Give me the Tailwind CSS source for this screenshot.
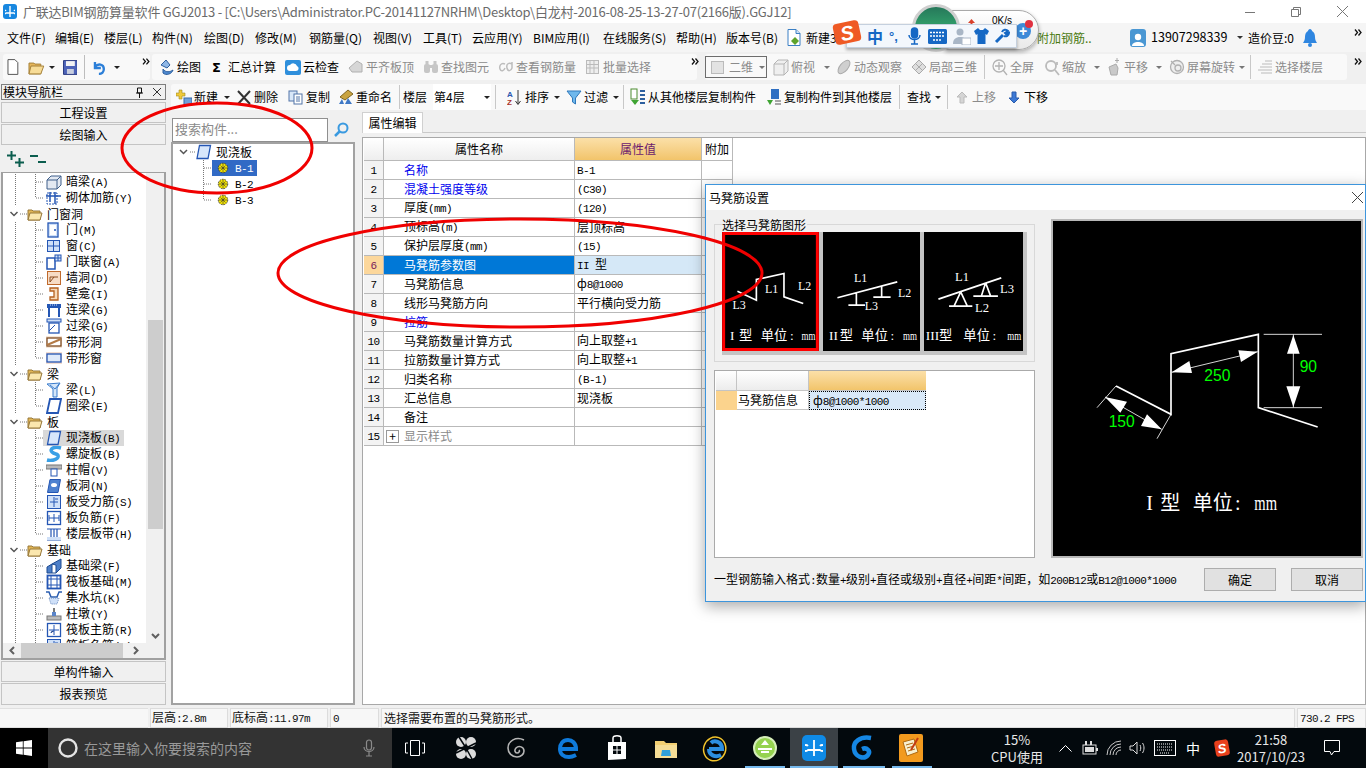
<!DOCTYPE html>
<html lang="zh-CN">
<head>
    <meta charset="UTF-8">
    <meta name="viewport" content="width=device-width, initial-scale=1.0">
    <title>广联达BIM钢筋算量软件 GGJ2013</title>
    <script src="https://cdn.jsdelivr.net/npm/@tailwindcss/browser@4"></script>
</head>
<body class="relative w-[1366px] h-[768px] overflow-hidden flex flex-col bg-[#f0f0f0] text-[12px] leading-none text-black font-['Noto_Sans_CJK_SC',sans-serif]">

    <!-- Title bar -->
    <div class="h-[23px] shrink-0 bg-white flex items-center text-[13px] text-[#6b6b6b]">
        <div class="ml-[3px] w-[14px] h-[15px] rounded-[3px] bg-[#1787e0] flex items-center justify-center">
            <svg width="10" height="11" viewBox="0 0 10 11" fill="none" stroke="#fff" stroke-width="1.4"><path d="M5 0v11M1 5a2 2 0 1 0 0 2h8a2 2 0 1 0 0-2"/></svg>
        </div>
        <span class="ml-[6px] whitespace-nowrap tracking-[-0.23px] w-[800px]">广联达BIM钢筋算量软件 GGJ2013 - [C:\Users\Administrator.PC-20141127NRHM\Desktop\白龙村-2016-08-25-13-27-07(2166版).GGJ12]</span>
        <svg class="ml-[422px]" width="10" height="10" viewBox="0 0 10 10" stroke="#777"><path d="M0 5.5h10"/></svg>
        <svg class="ml-[36px]" width="10" height="10" viewBox="0 0 10 10" fill="none" stroke="#777"><path d="M.5 2.5h7v7h-7zM2.5 2.5v-2h7v7h-2"/></svg>
        <svg class="ml-[36px]" width="11" height="11" viewBox="0 0 11 11" stroke="#777"><path d="M0 0l11 11M11 0L0 11"/></svg>
    </div>

    <!-- Menu bar -->
    <div class="h-[29px] shrink-0 bg-[#f5f5f5] flex items-center whitespace-nowrap">
        <div class="w-[7px]"></div>
        <div class="w-[48px]">文件(F)</div>
        <div class="w-[49px]">编辑(E)</div>
        <div class="w-[48px]">楼层(L)</div>
        <div class="w-[52px]">构件(N)</div>
        <div class="w-[51px]">绘图(D)</div>
        <div class="w-[54px]">修改(M)</div>
        <div class="w-[64px]">钢筋量(Q)</div>
        <div class="w-[50px]">视图(V)</div>
        <div class="w-[49px]">工具(T)</div>
        <div class="w-[61px]">云应用(Y)</div>
        <div class="w-[70px]">BIM应用(I)</div>
        <div class="w-[73px]">在线服务(S)</div>
        <div class="w-[50px]">帮助(H)</div>
        <div class="w-[61px]">版本号(B)</div>
        <div class="w-[19px]">
            <svg width="14" height="17" viewBox="0 0 14 17"><path d="M1 .5h8l4 4v12H1z" fill="#fff" stroke="#3b7fc4"/><path d="M9 .5v4h4" fill="#cfe2f6" stroke="#3b7fc4"/><path d="M8 8l4 4-4 4-4-4z" fill="#5da32c"/></svg>
        </div>
        <div class="w-[231px]">新建3</div>
        <div class="w-[93px] text-[#4a7a10]">附加钢筋..</div>
        <div class="w-[21px]">
            <div class="w-[16px] h-[18px] rounded-[3px] bg-[#4a97d3] flex items-end justify-center overflow-hidden">
                <svg width="14" height="15" viewBox="0 0 14 15" fill="#fff"><circle cx="7" cy="5" r="3.2"/><path d="M1 14c0-3 3-4 6-4s6 1 6 4z"/></svg>
            </div>
        </div>
        <div class="w-[86px] text-[12.5px]">13907298339</div>
        <div class="w-[11px]"><i class="block w-0 h-0 border-x-[3px] border-x-transparent border-t-[3px] border-t-[#333]"></i></div>
        <div class="w-[55px]">造价豆:0</div>
        <svg width="14" height="18" viewBox="0 0 14 18" fill="#2f86e0"><path d="M7 0c1 0 2 1 2 2 2 1 3 3 3 6 0 3 1 4 2 6H0c1-2 2-3 2-6 0-3 1-5 3-6 0-1 1-2 2-2z"/><circle cx="7" cy="16" r="2"/></svg>
        <svg class="ml-auto mr-[4px] -mt-[10px]" width="8" height="7" viewBox="0 0 8 7" fill="none" stroke="#111" stroke-width="1.300"><path d="M1 .5L3.500 3.500 1 6.500M4.500 .5L7 3.500 4.500 6.500"/></svg>
    </div>

    <!-- Main toolbar -->
    <div class="h-[30px] shrink-0 flex items-center whitespace-nowrap text-[#8b8b8b]">
        <div class="ml-[3px] w-[147px] h-[26px] rounded-[3px] bg-[#f9f9f9] flex items-center text-black">
            <svg class="ml-[3px]" width="14" height="16" viewBox="0 0 14 16"><path d="M2 .5h7l3 3v12H2z" fill="#fff" stroke="#555"/></svg>
            <svg class="ml-[8px]" width="17" height="15" viewBox="0 0 17 15"><path d="M1 14V3h5l1 1h6v10z" fill="#e6b65a" stroke="#a5813a"/><path d="M3 6h13l-3 8H1z" fill="#f7dc97" stroke="#a5813a"/></svg>
            <i class="ml-[4px] w-0 h-0 border-x-[3px] border-x-transparent border-t-[3px] border-t-[#222]"></i>
            <svg class="ml-[8px]" width="15" height="15" viewBox="0 0 15 15"><path d="M.5.5h14v14H.5z" fill="#4d63b8" stroke="#2a3a80"/><path d="M3 1h9v5H3z" fill="#f3f3f3"/><path d="M4 9h7v5H4z" fill="#c9cfdf"/></svg>
            <div class="ml-[7px] w-px h-[24px] bg-[#bdbdbd]"></div>
            <svg class="ml-[7px]" width="15" height="15" viewBox="0 0 15 15" fill="none" stroke="#2c7fd8" stroke-width="2.4"><path d="M3 2v6h6"/><path d="M3 7c3-4 9-3 9 2 0 3-2 5-5 5"/></svg>
            <i class="ml-[7px] w-0 h-0 border-x-[3px] border-x-transparent border-t-[3px] border-t-[#222]"></i>
            <svg class="ml-[22px] -mt-[12px]" width="8" height="7" viewBox="0 0 8 7" fill="none" stroke="#111" stroke-width="1.300"><path d="M1 .5L3.500 3.500 1 6.500M4.500 .5L7 3.500 4.500 6.500"/></svg>
        </div>
        <div class="ml-[2px] w-[545px] h-[26px] rounded-[3px] bg-[#f9f9f9] flex items-center">
            <div class="ml-[7px] w-[51px] flex items-center gap-[2px] text-black"><svg width="16" height="17" viewBox="0 0 16 17"><path d="M2 6l5-5 4 5-3 3z" fill="#8fb7e6" stroke="#2d5f9e"/><path d="M4 10c3 4 7 3 10 1-1 4-7 6-10 3z" fill="#4f8ad0" stroke="#2d5f9e"/></svg><span>绘图</span></div>
            <div class="w-[75px] flex items-center gap-[2px] text-black"><span class="w-[16px] pl-[2px] font-bold font-['DejaVu_Sans'] text-[13px]">Σ</span><span>汇总计算</span></div>
            <div class="w-[63px] flex items-center gap-[2px] text-black"><div class="w-[16px] h-[15px] rounded-[2px] bg-[#2f8fdc] flex items-center justify-center"><svg width="12" height="10" viewBox="0 0 12 10" fill="#fff"><path d="M3 9a3 3 0 0 1 0-6 4 4 0 0 1 7 1 2.6 2.6 0 0 1-1 5z"/></svg></div><span>云检查</span></div>
            <div class="w-[75px] flex items-center gap-[2px]"><svg width="16" height="16" viewBox="0 0 16 16"><path d="M1 9l8-7 5 3v8H4z" fill="#d6d6d6" stroke="#b0b0b0"/></svg><span>平齐板顶</span></div>
            <div class="w-[75px] flex items-center gap-[2px]"><svg width="16" height="14" viewBox="0 0 16 14" fill="#c6c6c6"><rect x="1" y="4" width="6" height="9" rx="2"/><rect x="9" y="4" width="6" height="9" rx="2"/><rect x="6" y="5" width="4" height="3"/><rect x="2.5" y="1" width="3" height="3"/><rect x="10.5" y="1" width="3" height="3"/></svg><span>查找图元</span></div>
            <div class="w-[87px] flex items-center gap-[2px]"><svg width="16" height="12" viewBox="0 0 16 12" fill="none" stroke="#bdbdbd" stroke-width="1.5"><path d="M7 3C3 1 1 5 2 8s4 2 5-1M14 3c-3-2-6 0-5 4s4 3 5 0V1"/></svg><span>查看钢筋量</span></div>
            <div class="w-[75px] flex items-center gap-[2px]"><svg width="16" height="16" viewBox="0 0 16 16" fill="#eee" stroke="#bbb"><rect x="1.5" y="1.5" width="12" height="13"/><path d="M1.5 5.5h12M1.5 9h12M5 1.500v13M9 1.500v13"/></svg><span>批量选择</span></div>
        </div>
        <svg class="-ml-[6px] mr-[6px] -mt-[12px]" width="8" height="7" viewBox="0 0 8 7" fill="none" stroke="#111" stroke-width="1.300"><path d="M1 .5L3.500 3.500 1 6.500M4.500 .5L7 3.500 4.500 6.500"/></svg>
        <div class="w-[642px] h-[26px] rounded-[3px] bg-[#f9f9f9] flex items-center">
            <div class="w-[62px] h-[22px] border border-[#6d6d6d] flex items-center"><span class="ml-[5px] w-[13px] h-[13px] bg-[#e3e3e3] border border-[#bbb]"></span><span class="ml-[5px]">二维</span><i class="ml-[6px] w-0 h-0 border-x-[3px] border-x-transparent border-t-[3px] border-t-[#777]"></i></div>
            <div class="ml-[6px] w-[63px] flex items-center gap-[2px]"><svg width="16" height="17" viewBox="0 0 16 17" fill="#efefef" stroke="#b5b5b5"><path d="M1 5h10v11H1zM1 5l4-4h10v11l-4 4M11 5l4-4"/></svg><span>俯视</span><i class="ml-[7px] w-0 h-0 border-x-[3px] border-x-transparent border-t-[3px] border-t-[#777]"></i></div>
            <div class="w-[75px] flex items-center gap-[2px]"><svg width="16" height="16" viewBox="0 0 16 16"><ellipse cx="8" cy="8" rx="4" ry="8" transform="rotate(40 8 8)" fill="#cfcfcf" stroke="#aaa"/></svg><span>动态观察</span></div>
            <div class="w-[73px] flex items-center gap-[2px]"><svg width="16" height="16" viewBox="0 0 16 16" fill="#dedede" stroke="#aaa"><path d="M8 1l7 7-7 7-7-7zM4 4l8 8M12 4l-8 8"/></svg><span>局部三维</span></div>
            <div class="w-px h-[24px] bg-[#c8c8c8]"></div>
            <div class="ml-[7px] w-[52px] flex items-center gap-[2px]"><svg width="16" height="17" viewBox="0 0 16 17" fill="none" stroke="#b3b3b3" stroke-width="1.3"><circle cx="7" cy="7" r="6"/><path d="M11 11l4 5M7 3v8M3 7h8"/></svg><span>全屏</span></div>
            <div class="w-[62px] flex items-center gap-[2px]"><svg width="16" height="17" viewBox="0 0 16 17" fill="none" stroke="#bbb" stroke-width="1.8"><circle cx="7" cy="7" r="5"/><path d="M11 11l4 5M13 3v3"/></svg><span>缩放</span><i class="ml-[6px] w-0 h-0 border-x-[3px] border-x-transparent border-t-[3px] border-t-[#777]"></i></div>
            <div class="w-[63px] flex items-center gap-[2px]"><svg width="16" height="18" viewBox="0 0 16 18" fill="#c9c9c9"><path d="M3 9l7-3 2 4-1 7H5zM11 0v5M9 2.500h4" stroke="#aaa"/></svg><span>平移</span><i class="ml-[6px] w-0 h-0 border-x-[3px] border-x-transparent border-t-[3px] border-t-[#777]"></i></div>
            <div class="w-[81px] flex items-center gap-[2px]"><svg width="16" height="16" viewBox="0 0 16 16" fill="#eee" stroke="#b0b0b0" stroke-width="1.300"><circle cx="8" cy="8" r="6.500"/><circle cx="9" cy="9" r="3"/><path d="M2 2l4 4"/></svg><span>屏幕旋转</span><i class="ml-[2px] w-0 h-0 border-x-[3px] border-x-transparent border-t-[3px] border-t-[#777]"></i></div>
            <div class="w-px h-[24px] bg-[#c8c8c8]"></div>
            <div class="ml-[6px] flex items-center gap-[2px]"><svg width="16" height="14" viewBox="0 0 16 14" fill="none" stroke="#bbb"><path d="M5 4h10M3 7h12M1 10h14M4 13h11M8 1h7"/></svg><span>选择楼层</span></div>
        </div>
        <svg class="ml-auto mr-[4px] -mt-[12px]" width="8" height="7" viewBox="0 0 8 7" fill="none" stroke="#111" stroke-width="1.300"><path d="M1 .5L3.500 3.500 1 6.500M4.500 .5L7 3.500 4.500 6.500"/></svg>
    </div>

    <!-- Workspace -->
    <div class="flex-1 min-h-0 flex">

        <!-- Module navigation -->
        <aside class="w-[171px] shrink-0 pl-[1px] pr-[5px] pt-[2px] flex flex-col">
            <div class="h-[16px] border border-[#7e7e7e] bg-[#f0f0f0] flex items-center pl-[1px]">
                <span>模块导航栏</span>
                <svg class="ml-[72px]" width="9" height="11" viewBox="0 0 9 11" fill="none" stroke="#111"><path d="M2.500 1h4v5h-4zM1 6h7M4.500 6v5"/></svg>
                <svg class="ml-[9px]" width="8" height="8" viewBox="0 0 8 8" stroke="#333"><path d="M0 0l8 8M8 0L0 8"/></svg>
            </div>
            <div class="mt-[2px] h-[21px] border border-[#c4c4c4] bg-[#f0f0f0] flex items-center justify-center">工程设置</div>
            <div class="mt-[1px] h-[21px] border border-[#c4c4c4] bg-[#f0f0f0] flex items-center justify-center">绘图输入</div>
            <div class="h-[27px] flex items-center pl-[6px] gap-[6px]">
                <svg width="17" height="16" viewBox="0 0 17 16" fill="none" stroke="#0b5d4e" stroke-width="2"><path d="M0 4.500h9M4.500 0v9M8 11.500h9M12.500 7v9"/></svg>
                <svg width="16" height="10" viewBox="0 0 16 10" fill="none" stroke="#0b5d4e" stroke-width="2"><path d="M0 2h8M8 8h8"/></svg>
            </div>
            <div class="h-[488px] border-2 border-[#a0a0a0] bg-[#f0f0f0] flex flex-col border-t-[1px]">
                <div class="flex-1 min-h-0 flex">
                    <div id="navTree" class="w-[143px] shrink-0 bg-white overflow-hidden pt-[1px]"></div>
                    <div class="flex-1 flex flex-col items-center">
                        <div class="h-[147px]"></div>
                        <div class="w-[15px] h-[209px] bg-[#cdcdcd]"></div>
                        <div class="flex-1"></div>
                        <svg class="mb-[4px]" width="9" height="6" viewBox="0 0 9 6" fill="none" stroke="#606060" stroke-width="2"><path d="M1 1l3.500 3.500L8 1"/></svg>
                    </div>
                </div>
                <div class="h-[15px] shrink-0 flex items-center">
                    <svg class="ml-[6px]" width="6" height="9" viewBox="0 0 6 9" fill="none" stroke="#606060" stroke-width="2"><path d="M5 1L1.500 4.500 5 8"/></svg>
                    <div class="ml-[6px] w-[102px] h-[15px] bg-[#cdcdcd]"></div>
                    <svg class="ml-[10px]" width="6" height="9" viewBox="0 0 6 9" fill="none" stroke="#606060" stroke-width="2"><path d="M1 1l3.500 3.500L1 8"/></svg>
                </div>
            </div>
            <div class="mt-[1px] h-[21px] border border-[#c4c4c4] bg-[#f0f0f0] flex items-center justify-center">单构件输入</div>
            <div class="mt-[1px] h-[22px] border border-[#c4c4c4] bg-[#f0f0f0] flex items-center justify-center">报表预览</div>
        </aside>

        <div class="flex-1 min-w-0 flex flex-col">
            <!-- Component toolbar -->
            <div class="mt-[2px] h-[26px] shrink-0 rounded-l-[3px] bg-[#f9f9f9] flex items-center whitespace-nowrap pl-[5px]">
                <div class="w-[60px] flex items-center gap-[2px]"><svg width="16" height="16" viewBox="0 0 16 16"><path d="M3 1h3v3h3v3H6v3H3V7H0V4h3z" fill="#f0c93a" stroke="#a08a1e" stroke-width=".6"/><rect x="8" y="9" width="8" height="7" fill="#6ea0dc" stroke="#3869a8"/></svg><span>新建</span><i class="ml-[4px] w-0 h-0 border-x-[3px] border-x-transparent border-t-[3px] border-t-[#222]"></i></div>
                <div class="w-[52px] flex items-center gap-[2px]"><svg width="16" height="15" viewBox="0 0 16 15" stroke="#333" stroke-width="2"><path d="M2 1l12 13M14 1L2 14"/></svg><span>删除</span></div>
                <div class="w-[50px] flex items-center gap-[2px]"><svg width="16" height="15" viewBox="0 0 16 15"><rect x="1" y="1" width="8" height="10" fill="#d9e7f8" stroke="#5375a8"/><rect x="6" y="4" width="8" height="10" fill="#fff" stroke="#5375a8"/><path d="M8 7h4M8 9h4M8 11h4" stroke="#5375a8"/></svg><span>复制</span></div>
                <div class="w-[61px] flex items-center gap-[2px]"><svg width="16" height="16" viewBox="0 0 16 16"><path d="M2 8l8-7 5 4-8 6z" fill="#c9a441" stroke="#806520"/><path d="M1 15l3-5 2 5zM7 15l3-6 4 6z" fill="#3f79c6"/></svg><span>重命名</span></div>
                <div class="w-px h-[24px] bg-[#c8c8c8]"></div>
                <div class="ml-[3px]">楼层</div>
                <div class="ml-[6px] w-[58px] h-[26px] bg-white flex items-center justify-between pl-px pr-[1px]"><span>第4层</span><i class="w-0 h-0 border-x-[3px] border-x-transparent border-t-[3px] border-t-[#222]"></i></div>
                <div class="ml-[4px] w-px h-[24px] bg-[#c8c8c8]"></div>
                <div class="ml-[11px] w-[59px] flex items-center gap-[2px]"><svg width="16" height="17" viewBox="0 0 16 17"><text x="0" y="8" font-size="8" fill="#2a58b0" font-family="Liberation Sans" font-weight="bold">A</text><text x="0" y="16" font-size="8" fill="#a8332a" font-family="Liberation Sans" font-weight="bold">Z</text><path d="M11 1v14M8.500 12l2.500 3.500 2.500-3.500" fill="none" stroke="#333"/></svg><span>排序</span><i class="ml-[3px] w-0 h-0 border-x-[3px] border-x-transparent border-t-[3px] border-t-[#222]"></i></div>
                <div class="w-[57px] flex items-center gap-[2px]"><svg width="16" height="15" viewBox="0 0 16 15"><path d="M1 1h14L9.500 8v6l-3-2V8z" fill="#6fb8ec" stroke="#2f78bb"/></svg><span>过滤</span><i class="ml-[3px] w-0 h-0 border-x-[3px] border-x-transparent border-t-[3px] border-t-[#222]"></i></div>
                <div class="w-px h-[24px] bg-[#c8c8c8]"></div>
                <div class="ml-[6px] w-[136px] flex items-center gap-[2px]"><svg width="16" height="18" viewBox="0 0 16 18"><rect x="1" y="1" width="6" height="10" fill="#fff" stroke="#4c8c30"/><path d="M1 12l4 5 4-5z" fill="#3fa433"/><path d="M10 3h5M10 7h5M10 11h5M10 15h5" stroke="#2d5f9e" stroke-width="2"/></svg><span>从其他楼层复制构件</span></div>
                <div class="w-[133px] flex items-center gap-[2px]"><svg width="16" height="18" viewBox="0 0 16 18"><rect x="5" y="1" width="8" height="10" fill="#2f6fc2"/><path d="M1 12l3 5 3-5z" fill="#3fa433"/><path d="M9 13h6M9 16h6" stroke="#555"/></svg><span>复制构件到其他楼层</span></div>
                <div class="w-px h-[24px] bg-[#c8c8c8]"></div>
                <div class="ml-[7px]">查找</div><i class="ml-[4px] w-0 h-0 border-x-[3px] border-x-transparent border-t-[3px] border-t-[#222]"></i>
                <div class="ml-[6px] w-px h-[24px] bg-[#c8c8c8]"></div>
                <div class="ml-[6px] w-[52px] flex items-center gap-[2px] text-[#8b8b8b]"><svg width="16" height="13" viewBox="0 0 16 13" fill="#d5d5d5" stroke="#bbb"><path d="M8 1l5 5h-3v6H6V6H3z"/></svg><span>上移</span></div>
                <div class="flex items-center gap-[2px]"><svg width="16" height="13" viewBox="0 0 16 13" fill="#3c79d6" stroke="#2a5cab"><path d="M8 12l5-5h-3V1H6v6H3z"/></svg><span>下移</span></div>
            </div>

            <div class="flex-1 min-h-0 flex">
                <!-- Component tree -->
                <div class="w-[184px] shrink-0 flex flex-col pt-[7px] pb-[3px]">
                    <div class="h-[25px] flex items-center shrink-0">
                        <div class="ml-px w-[156px] h-[24px] border border-[#8f8f8f] bg-white flex items-center pl-[2px] pb-[2px] text-[13px] text-[#8a8a8a]">搜索构件...</div>
                        <svg class="ml-[6px]" width="15" height="15" viewBox="0 0 15 15" fill="none"><circle cx="9" cy="6" r="4.500" stroke="#3a9ae0" stroke-width="2"/><path d="M6 9l-5 5" stroke="#3a9ae0" stroke-width="2.500"/></svg>
                    </div>
                    <div class="flex-1 border-2 border-[#a2a2a2] bg-white">
                        <div class="h-[16px] flex items-center">
                            <svg class="shrink-0" width="23" height="16" viewBox="0 0 23 16" fill="none"><path d="M7 6l3.500 3.500L14 6" stroke="#555" stroke-width="1.500"/><path d="M17 8h6" stroke="#777" stroke-dasharray="1 1"/></svg>
                            <svg class="mr-[4px] shrink-0" width="16" height="16" viewBox="0 0 16 16"><path d="M3.500 1.500h11l-2.500 13H1z" fill="#d8e7fb" stroke="#2456b4" stroke-width="1.300"/></svg>
                            <span>现浇板</span>
                        </div>
                        <div id="compTree"></div>
                    </div>
                </div>

                <!-- Properties -->
                <div class="flex-1 min-w-0 pl-[7px] pt-[2px] pb-[3px] flex flex-col">
                    <div class="h-[21px] shrink-0 flex border-b border-[#c9c9c9]">
                        <div class="w-[61px] h-[21px] bg-white border border-b-0 border-[#d0d0d0] flex items-center justify-center">属性编辑</div>
                    </div>
                    <div class="mt-[4px] flex-1 bg-white border border-[#a8a8a8] pl-px">
                        <div id="propTable" class="w-[370px] grid grid-cols-[20px_191px_127px_31px]"></div>
                    </div>
                </div>
            </div>
        </div>
    </div>

    <!-- Status bar -->
    <div class="h-[20px] shrink-0 flex gap-[2px] text-[#111] bg-[#f0f0f0]">
        <div class="w-[148px] bg-[#f7f7f7] border-y border-[#e0e0e0]"></div>
        <div class="w-[78px] bg-[#f7f7f7] border border-[#dcdcdc] flex items-center pl-[1px]" data-t="层高:2.8m"></div>
        <div class="w-[98px] bg-[#f7f7f7] border border-[#dcdcdc] flex items-center pl-[1px]" data-t="底标高:11.97m"></div>
        <div class="w-[49px] bg-[#f7f7f7] border border-[#dcdcdc] flex items-center pl-[2px]" data-t="0"></div>
        <div class="w-[914px] bg-[#f7f7f7] border border-[#dcdcdc] flex items-center pl-[2px]">选择需要布置的马凳筋形式。</div>
        <div class="flex-1 bg-[#f7f7f7] border border-[#dcdcdc] flex items-center pl-[2px]" data-t="730.2 FPS"></div>
    </div>

    <!-- Taskbar -->
    <div class="h-[40px] shrink-0 flex items-center bg-[#03090d] text-white relative">
        <div class="w-[48px] h-full bg-black flex items-center justify-center">
            <svg width="16" height="16" viewBox="0 0 16 16" fill="#fff"><path d="M0 2.300l6.800-1v6.300H0zM7.600 1.200L16 0v7.600H7.600zM0 8.400h6.800v6.300l-6.800-1zM7.600 8.400H16V16l-8.400-1.200z"/></svg>
        </div>
        <div class="w-[344px] h-full bg-[#333333] flex items-center text-[14px] text-[#999]">
            <svg class="ml-[9px]" width="22" height="22" viewBox="0 0 22 22" fill="none" stroke="#e4e4e4" stroke-width="2.400"><circle cx="11" cy="11" r="8.500"/></svg>
            <span class="ml-[5px]">在这里输入你要搜索的内容</span>
            <svg class="ml-[111px]" width="12" height="18" viewBox="0 0 12 18" fill="none" stroke="#8a8a8a" stroke-width="1.200"><rect x="3.500" y="1" width="5" height="10" rx="2.500"/><path d="M1 8c0 6 10 6 10 0M6 13v4M3 17h6"/></svg>
        </div>
        <svg class="ml-[13px] shrink-0" width="20" height="18" viewBox="0 0 20 18" fill="none" stroke="#fff"><path d="M5.500 1.500h9v15h-9zM3 4H.500v10H3M17 4h2.500v10H17"/></svg>
        <svg class="ml-[30px] shrink-0" width="22" height="24" viewBox="0 0 22 24" fill="#dcdcdc"><circle cx="6" cy="6" r="5"/><circle cx="16" cy="6" r="5"/><circle cx="6" cy="18" r="5"/><circle cx="16" cy="18" r="5"/><path d="M11 12L4 1M11 12l10-5M11 12L1 17M11 12l6 11" stroke="#03090d" stroke-width="1.500"/></svg>
        <svg class="ml-[29px] shrink-0" width="20" height="22" viewBox="0 0 20 22" fill="none" stroke="#b5b5b5" stroke-width="1.600"><path d="M18 3C10-1 2 4 2 11c0 5 4 9 9 9 4 0 7-3 7-6 0-4-5-6-8-3-2 2-1 5 1 5 2 0 3-2 2-3"/></svg>
        <svg class="ml-[31px] shrink-0" width="22" height="22" viewBox="0 0 22 22" fill="none" stroke="#0f7bdc" stroke-width="4"><path d="M3 12h16C19 6 15 3 11 3 6 3 3 7 3 12s4 8 9 8c3 0 5-1 7-2"/></svg>
        <svg class="ml-[28px] shrink-0" width="20" height="26" viewBox="0 0 20 26" fill="#fff"><path d="M1 7h18v17l-18 1z"/><path d="M6 7V3c0-3 8-3 8 0v4" fill="none" stroke="#fff" stroke-width="1.500"/><path d="M6 11h3.500v3.500H6zM10.500 11H14v3.500h-3.500zM6 15.500h3.500V19H6zM10.500 15.500H14V19h-3.500z" fill="#03090d"/></svg>
        <svg class="ml-[28px] shrink-0" width="22" height="20" viewBox="0 0 22 20"><path d="M0 3h9l2 2h11v15H0z" fill="#f2cf72"/><rect y="7" width="22" height="13" fill="#f5dd96"/><path d="M7 12h8l1 6H6z" fill="#2fa0dc"/></svg>
        <svg class="ml-[25px] shrink-0" width="26" height="28" viewBox="0 0 26 28" fill="none"><ellipse cx="13" cy="15" rx="11" ry="12" transform="rotate(20 13 14)" stroke="#f3c42c" stroke-width="1.500"/><path d="M7 15h13c0-8-8-9-11-6M7 15c0 6 6 9 12 6" stroke="#2c8fe0" stroke-width="4"/></svg>
        <svg class="ml-[25px] shrink-0" width="24" height="26" viewBox="0 0 24 26"><circle cx="12" cy="13" r="11" fill="#95d24f" stroke="#d5edb9" stroke-width="2"/><path d="M5 14h14M8 17h8" stroke="#fff" stroke-width="2"/><path d="M12 5l4 5H8z" fill="#fff"/></svg>
        <div class="ml-[13px] w-[48px] shrink-0 h-full bg-[#3b4146] flex items-center justify-center">
            <div class="w-[24px] h-[26px] rounded-[5px] bg-[#0f8ae6] flex items-center justify-center">
                <svg width="18" height="18" viewBox="0 0 18 18" fill="none" stroke="#fff" stroke-width="1.800"><path d="M9 1v16M3 7a3 3 0 1 0 0 4h12a3 3 0 1 0 0-4"/></svg>
            </div>
        </div>
        <svg class="ml-[12px] shrink-0" width="24" height="28" viewBox="0 0 24 28" fill="none" stroke="#1587e4" stroke-width="4.500"><path d="M21 4C10 2 3 8 4 15c1 8 10 11 14 6 3-4-1-8-6-6"/></svg>
        <div class="ml-[25px] shrink-0 w-[24px] h-[28px] bg-[#f29a1e] rounded-[2px] flex items-center justify-center">
            <svg width="20" height="22" viewBox="0 0 20 22"><path d="M2 5l11-3 4 13-11 4z" fill="#f7efd0" stroke="#b06a10"/><path d="M5 8l7-2M6 11l7-2M7 14l7-2" stroke="#b06a10"/><path d="M17 1l-7 12" stroke="#c23b12" stroke-width="2"/></svg>
        </div>
        <div class="absolute bottom-0 left-[745px] w-[40px] h-[2px] bg-[#76b9ed]"></div>
        <div class="absolute bottom-0 left-[790px] w-[48px] h-[2px] bg-[#76b9ed]"></div>
        <div class="absolute bottom-0 left-[843px] w-[42px] h-[2px] bg-[#76b9ed]"></div>
        <div class="absolute bottom-0 left-[892px] w-[40px] h-[2px] bg-[#76b9ed]"></div>
        <div class="ml-[59px] shrink-0 w-[70px] flex flex-col items-center gap-[4px] text-[13px] text-[#e8e8e8] -mt-[1px]"><span>15%</span><span>CPU使用</span></div>
        <svg class="ml-[7px] shrink-0" width="13" height="8" viewBox="0 0 13 8" fill="none" stroke="#fff"><path d="M.500 7.500l6-6 6 6"/></svg>
        <svg class="ml-[10px] shrink-0" width="16" height="14" viewBox="0 0 16 14" fill="#ddd"><rect x="1" y="4" width="13" height="9" fill="none" stroke="#ddd"/><rect x="3" y="6" width="9" height="5"/><rect x="3" y="0" width="2" height="4"/><rect x="8" y="0" width="2" height="4"/><rect x="14" y="7" width="2" height="3"/></svg>
        <svg class="ml-[8px] shrink-0" width="18" height="16" viewBox="0 0 18 16" fill="none" stroke="#c8c8c8"><path d="M1 15A14 14 0 0 1 15 1M4 15A11 11 0 0 1 15 4M7 15a8 8 0 0 1 8-8M10 15a5 5 0 0 1 5-5"/></svg>
        <svg class="ml-[5px] shrink-0" width="16" height="14" viewBox="0 0 16 14" fill="none" stroke="#ddd"><path d="M1 5h3l4-4v12L4 9H1zM11 4c1 2 1 4 0 6M13.500 2c2 3 2 7 0 10"/></svg>
        <svg class="ml-[9px] shrink-0" width="22" height="16" viewBox="0 0 22 16" fill="none" stroke="#fff"><rect x=".5" y=".5" width="21" height="15"/><path d="M3 4h16M3 7h16M3 10h16M6 13h10" stroke-dasharray="1 1"/></svg>
        <span class="ml-[10px] shrink-0 text-[14px]">中</span>
        <span class="ml-[15px] shrink-0 w-[14px] h-[16px] bg-[#e8401c] rounded-[3px] rotate-[-10deg] flex items-center justify-center text-[13px] font-bold italic font-['Liberation_Sans']">S</span>
        <div class="ml-[3px] shrink-0 w-[78px] flex flex-col items-center gap-[4px] text-[13px] text-[#e8e8e8] -mt-[1px]"><span>21:58</span><span>2017/10/23</span></div>
        <svg class="ml-[14px] shrink-0" width="16" height="16" viewBox="0 0 16 16" fill="none" stroke="#fff"><path d="M.500.500h15v11H10L7.500 15 6 11.500H.500z"/></svg>
    </div>

    <!-- Rebar settings dialog -->
    <div class="absolute left-[705px] top-[184px] w-[661px] h-[418px] border border-[#3d95dc] bg-[#f0f0f0] shadow-[0_4px_14px_rgba(0,0,0,.35)] flex flex-col">
        <div class="h-[25px] shrink-0 bg-white flex items-center justify-between pl-[3px] pr-[2px]">
            <span>马凳筋设置</span>
            <svg width="11" height="11" viewBox="0 0 11 11" stroke="#444"><path d="M0 0l11 11M11 0L0 11"/></svg>
        </div>
        <div class="flex-1 flex pl-[8px]">
            <div class="w-[321px] shrink-0 pt-[14px] flex flex-col">
                <div class="relative h-[138px] border border-[#d8d8d8] pl-[7px] pt-[7px]">
                    <span class="absolute left-[7px] -top-[7px] bg-[#f0f0f0] pr-px leading-[14px]">选择马凳筋图形</span>
                    <div class="flex gap-[4px] w-[305px] h-[123px] bg-[#c4c4c4]">
                        <svg class="bg-black" width="97" height="119" viewBox="54 155 291 358">
                            <path d="M100 333L157 360V298L240 280V350L298 370" fill="none" stroke="#fff" stroke-width="5"/>
                            <g fill="#fff" font-family="Liberation Serif" font-size="36"><text x="183" y="340">L1</text><text x="282" y="330">L2</text><text x="85" y="388">L3</text></g>
                            <g fill="#fff" font-size="40" font-family="Liberation Serif, Noto Sans CJK SC"><text y="480"><tspan x="78">I</tspan><tspan x="105">型</tspan><tspan x="170">单位</tspan><tspan x="258">:</tspan></text><text x="293" y="480" textLength="42" lengthAdjust="spacingAndGlyphs">mm</text></g>
                            <rect x="58.500" y="159.500" width="282" height="349" fill="none" stroke="#ff0000" stroke-width="9"/>
                        </svg>
                        <svg class="bg-black" width="97" height="119" viewBox="357 155 291 358">
                            <path d="M400 353L580 305M457 340V375M433 375H483M533 320V351M508 351H560" fill="none" stroke="#fff" stroke-width="5"/>
                            <g fill="#fff" font-family="Liberation Serif" font-size="36"><text x="450" y="305">L1</text><text x="582" y="350">L2</text><text x="482" y="390">L3</text></g>
                            <g fill="#fff" font-size="40" font-family="Liberation Serif, Noto Sans CJK SC"><text y="480"><tspan x="375">II</tspan><tspan x="407">型</tspan><tspan x="472">单位</tspan><tspan x="560">:</tspan></text><text x="597" y="480" textLength="42" lengthAdjust="spacingAndGlyphs">mm</text></g>
                        </svg>
                        <svg class="bg-black" width="99" height="119" viewBox="660 155 297 358">
                            <path d="M703 357L892 293M770 335L750 378M770 335L790 378M735 378H805M845 308L832 348M845 308L860 348M808 348H882" fill="none" stroke="#fff" stroke-width="5"/>
                            <g fill="#fff" font-family="Liberation Serif" font-size="38"><text x="753" y="303">L1</text><text x="888" y="338">L3</text><text x="813" y="396">L2</text></g>
                            <g fill="#fff" font-size="40" font-family="Liberation Serif, Noto Sans CJK SC"><text y="480"><tspan x="665">III</tspan><tspan x="705">型</tspan><tspan x="778">单位</tspan><tspan x="866">:</tspan></text><text x="910" y="480" textLength="42" lengthAdjust="spacingAndGlyphs">mm</text></g>
                        </svg>
                    </div>
                </div>
                <div class="mt-[8px] h-[188px] border border-[#aaa] bg-white pl-px">
                    <div class="grid grid-cols-[21px_72px_117px] w-[210px]">
                        <div class="h-[20px] bg-gradient-to-b from-white to-[#ececec] border-r border-b border-[#c4c4c4]"></div>
                        <div class="h-[20px] bg-gradient-to-b from-white to-[#ececec] border-r border-b border-[#c4c4c4]"></div>
                        <div class="h-[20px] bg-gradient-to-b from-[#fbe0a8] to-[#f2c46a] border-b border-[#c4c4c4]"></div>
                        <div class="h-[19px] bg-[#fbd38d]"></div>
                        <div class="h-[19px] flex items-center pl-[1px] border-r border-b border-[#c4c4c4]">马凳筋信息</div>
                        <div class="h-[19px] flex items-center pl-[3px] bg-[#d9e9f8] border border-dotted border-black" data-t="ф8@1000*1000"></div>
                    </div>
                </div>
            </div>
            <div class="ml-[16px] mt-[9px] w-[312px] h-[339px] border-2 border-[#b8b8b8] bg-black">
                <svg width="308" height="335" viewBox="36 30 924 1005">
                    <path d="M830 648L652 590V370L390 428V610L225 525" fill="none" stroke="#fff" stroke-width="5"/>
                    <path d="M168 590L225 525M348 683L390 610M668 370H843M668 590H843M757 370V590M392 484L650 422M192 558L362 655" fill="none" stroke="#fff" stroke-width="2.500"/>
                    <path d="M757 372L738 428H776zM757 588L736 526H778zM392 484L445 450L453 486zM650 422L592 418L600 453zM192 558L258 572L238 605zM362 655L318 610L300 645z" fill="#fff"/>
                    <g fill="#00ff00" font-family="Liberation Sans" font-size="47"><text x="490" y="511">250</text><text x="776" y="484">90</text><text x="203" y="648">150</text></g>
                    <g fill="#fff" font-size="60" font-family="Liberation Serif, Noto Sans CJK SC"><text y="898"><tspan x="316">I</tspan><tspan x="358">型</tspan><tspan x="455">单位</tspan><tspan x="582">:</tspan></text><text x="640" y="898" textLength="68" lengthAdjust="spacingAndGlyphs">mm</text></g>
                </svg>
            </div>
        </div>
        <div class="h-[43px] shrink-0 flex items-center pl-[8px] whitespace-nowrap">
            <span id="hint" class="w-[490px]"></span>
            <div class="w-[72px] h-[23px] border border-[#adadad] bg-[#e1e1e1] flex items-center justify-center">确定</div>
            <div class="ml-[15px] w-[72px] h-[23px] border border-[#adadad] bg-[#e1e1e1] flex items-center justify-center">取消</div>
        </div>
    </div>

    <!-- Hand-drawn red marks -->
    <svg class="absolute left-0 top-0 pointer-events-none" width="1366" height="768" fill="none" stroke="#f00000" stroke-width="3">
        <ellipse cx="217" cy="148" rx="95" ry="45"/>
        <ellipse cx="520" cy="273" rx="242" ry="54"/>
    </svg>

    <!-- Floating widgets: network meter and IME bar -->
    <div class="absolute left-[945px] top-[10px] w-[94px] h-[40px] rounded-r-[20px] border border-[#a9a9a9] bg-gradient-to-b from-white to-[#e9e9e9] shadow-[0_2px_4px_rgba(0,0,0,.3)] flex items-start pl-[22px] pt-[5px] text-[10px] font-['Liberation_Sans']">
        <svg class="mt-[3px]" width="7" height="8" viewBox="0 0 7 8" fill="#d9402a"><path d="M3.500 0L7 4H4.500v4h-2V4H0z"/></svg>
        <span class="ml-[17px]">0K/s</span>
    </div>
    <div class="absolute left-[912px] top-[4px] w-[48px] h-[48px] rounded-full border-[3px] border-[#cfcfcf] bg-gradient-to-b from-[#26785a] via-[#33a36c] to-[#3fc27a]"></div>
    <div class="absolute left-[1015px] top-[23px] w-[16px] h-[16px] rounded-full bg-[#3d8ad8] flex items-center justify-center text-[14px] font-bold text-white font-['Liberation_Sans']">+</div>
    <div class="absolute left-[1025px] top-[20px] w-[8px] h-[8px] rounded-full bg-[#e03040]"></div>
    <div class="absolute left-[846px] top-[24px] w-[171px] h-[24px] border border-[#c5d0de] bg-[#f3f7fc] shadow-[0_2px_3px_rgba(0,0,0,.3)] flex items-center pl-[20px] text-[#1668c4]">
        <span class="text-[16px] font-bold">中</span>
        <span class="ml-[6px] text-[13px] font-bold font-['Liberation_Sans']">°,</span>
        <svg class="ml-[10px]" width="13" height="18" viewBox="0 0 13 18" fill="none" stroke="#1668c4" stroke-width="1.500"><rect x="3.500" y="1" width="6" height="10" rx="3" fill="#1668c4"/><path d="M1 8c0 6 11 6 11 0M6.500 13v4M3 17h7"/></svg>
        <svg class="ml-[7px]" width="19" height="15" viewBox="0 0 19 15"><rect width="19" height="15" rx="1.500" fill="#1668c4"/><path d="M2 3.500h15M2 7h15M5 11h9" stroke="#fff" stroke-width="1.500" stroke-dasharray="2 1"/></svg>
        <svg class="ml-[6px]" width="18" height="17" viewBox="0 0 18 17" fill="#a9b6c6"><circle cx="7" cy="4" r="3.500"/><path d="M0 16c0-5 3-7 7-7 2 0 3 0 4 1v6z"/><rect x="9" y="10" width="9" height="7" fill="#fff" stroke="#a9b6c6"/></svg>
        <svg class="ml-[3px]" width="15" height="16" viewBox="0 0 15 16" fill="#1668c4"><path d="M4 0L0 3l2 4 1.500-1v10h8V6L13 7l2-4-4-3-2 2H6z"/></svg>
        <svg class="ml-[5px]" width="16" height="16" viewBox="0 0 16 16" fill="none" stroke="#1668c4" stroke-width="3"><path d="M2 14l7-7"/><path d="M8 4a3.500 3.500 0 0 1 6-1l-3 2 1 1 3-1a3.500 3.500 0 0 1-5 3" stroke-width="2"/></svg>
    </div>
    <div class="absolute left-[834px] top-[22px] w-[26px] h-[21px] rounded-[4px] rotate-[-12deg] bg-[#ef5a24] flex items-center justify-center text-white text-[20px] font-bold italic font-['Liberation_Sans']">S</div>

    <script>
        // 宋体风格的混排：ASCII 用等宽窄字
        function mixed(text) {
            return `<span class="whitespace-pre">` + text.replace(/[\x20-\x7e]+/g, function (m) {
                return `<span class="font-['Liberation_Mono'] text-[11px] tracking-[-0.6px]">` + m + `</span>`;
            }) + `</span>`;
        }

        document.querySelectorAll('[data-t]').forEach(function (el) {
            el.innerHTML = mixed(el.dataset.t);
        });
        document.getElementById('hint').innerHTML = mixed('一型钢筋输入格式:数量+级别+直径或级别+直径+间距*间距，如200B12或B12@1000*1000');

        const bl = '#2456b4', lt = '#cfe0f8';
        const ICONS = {
            an: `<path d="M1 6l4-4h10v9l-4 4H1z" fill="#e3e9f2" stroke="#3f5f8a"/><path d="M1 6h10v9M11 6l4-4" fill="none" stroke="#3f5f8a"/>`,
            qt: `<rect x="1" y="3" width="10" height="11" fill="#fff" stroke="${bl}" stroke-dasharray="2 1"/><path d="M0 6h15M4 2v10M9 2v12" stroke="${bl}" stroke-width="1.500"/>`,
            men: `<rect x="2" y="1" width="10" height="14" fill="${lt}" stroke="${bl}" stroke-width="1.300"/><rect x="4" y="3" width="6" height="10" fill="#fff"/><circle cx="9" cy="8" r="1" fill="${bl}"/>`,
            chuang: `<rect x="1.500" y="2.500" width="12" height="11" fill="${lt}" stroke="${bl}"/><path d="M7.500 2.500v11M1.500 8h12" stroke="${bl}"/>`,
            mlc: `<rect x="1" y="4" width="8" height="11" fill="#fff" stroke="${bl}" stroke-width="1.500"/><rect x="9" y="1" width="6" height="6" fill="${lt}" stroke="${bl}"/><path d="M12 1v6M9 4h6" stroke="${bl}"/>`,
            qd: `<rect x="1.500" y="1.500" width="13" height="13" fill="#f7dcc5" stroke="#c06a2c"/><path d="M4 12l4-5h4M4 12V7h4" fill="none" stroke="#8a4a1c"/>`,
            bk: `<path d="M4 2h8v12H4v-3h4V5H4z" fill="#f7d9b8" stroke="#b5601f" stroke-width="1.300"/>`,
            ll: `<rect x="1" y="2" width="14" height="4" fill="${bl}"/><path d="M3 6v9M13 6v9" stroke="${bl}" stroke-width="2"/><path d="M4 3h8" stroke="#cfe0f8" stroke-dasharray="1 1"/>`,
            gl: `<rect x="1" y="1" width="14" height="3" fill="${lt}" stroke="${bl}"/><rect x="3" y="5" width="10" height="10" fill="#fff" stroke="${bl}" stroke-width="1.300"/><path d="M3 13l6-6" stroke="${bl}"/>`,
            dxd: `<rect x="0" y="2" width="16" height="12" fill="#f6e6d6"/><rect x="1" y="4" width="14" height="8" fill="#fff" stroke="#7d4a20" stroke-width="1.300"/><path d="M1 11L15 5" stroke="#b37a45" stroke-width="2"/>`,
            dxc: `<rect x="0" y="2" width="16" height="12" fill="#f3ddd0"/><rect x="1" y="4" width="14" height="8" fill="#dfeafa" stroke="${bl}" stroke-width="1.300"/>`,
            liang: `<path d="M1 2l13-1-3 5v9H7V7z" fill="#d4e6fa" stroke="#3b7ccc"/><path d="M4 3l5 4 4-5" fill="none" stroke="#3b7ccc"/>`,
            ql: `<path d="M4 1h11l-3 14H1z" fill="#fff" stroke="${bl}" stroke-width="1.800"/>`,
            xjb: `<path d="M4 1.500h10.500L12 14.500H1.500z" fill="#d8e7fb" stroke="${bl}" stroke-width="1.300"/>`,
            lxb: `<path d="M15 2C8 0 3 3 6 6c3 3 7 1 6 5-1 3-7 4-11 3" fill="none" stroke="#39a0e6" stroke-width="3.500"/>`,
            zm: `<rect x="0" y="3" width="16" height="4" fill="#b8b8b8" stroke="#777"/><rect x="5" y="7" width="6" height="7" fill="#fff" stroke="${bl}"/>`,
            bd: `<path d="M4 1.500h10.500L12 14.500H1.500z" fill="#4f82d0" stroke="${bl}"/><ellipse cx="8" cy="7" rx="3" ry="2" fill="#fff"/>`,
            bslj: `<rect x="1.500" y="1.500" width="13" height="13" fill="${lt}" stroke="${bl}"/><path d="M8 3v10M4 8h8" stroke="${bl}"/><path d="M9 5h3" stroke="${bl}"/>`,
            bfj: `<rect x="1.500" y="1.500" width="13" height="13" fill="#fff" stroke="${bl}" stroke-width="1.300"/><path d="M3 8h10M8 4v8M3 5v6M13 5v6" stroke="${bl}"/>`,
            lcbd: `<path d="M1 3h14M1 14h14M5 3v11M11 3v11M8 3v11" stroke="${bl}" stroke-width="1.200"/><rect x="1" y="11" width="14" height="3" fill="${lt}"/>`,
            jcl: `<path d="M1 15V9l5-3v9zM6 6l9-5v9l-5 5V7z" fill="#4d7fc8" stroke="#1d4a90"/><path d="M6 15h4" stroke="#1d4a90"/>`,
            fbjc: `<rect x="1.500" y="1.500" width="13" height="13" fill="#fff" stroke="${bl}" stroke-width="1.800"/><path d="M5 2v12M11 2v12M2 5h12M2 11h12" stroke="${bl}"/>`,
            jsk: `<path d="M0 2h3l2 5h6l2-5h3" fill="none" stroke="#2a5db0" stroke-width="1.500"/><path d="M3 8h10l-2 6H5z" fill="${lt}" stroke="#6a8cc0" stroke-dasharray="1 1"/>`,
            zd: `<rect x="1" y="10" width="14" height="4" fill="#bcbcbc" stroke="#777"/><path d="M6 10V6h4v4z" fill="#5a84c8"/><path d="M8 2v4" stroke="#777" stroke-width="2"/>`,
            fbzj: `<rect x="1.500" y="1.500" width="13" height="13" fill="#fff" stroke="${bl}" stroke-width="1.300"/><path d="M8 3v10M3 8h10M5 11c0-2 2-2 3-2" stroke="${bl}"/>`
        };

        const NAV = [
            [1, 'an', '暗梁(A)'], [1, 'qt', '砌体加筋(Y)'],
            [0, '门窗洞'],
            [1, 'men', '门(M)'], [1, 'chuang', '窗(C)'], [1, 'mlc', '门联窗(A)'], [1, 'qd', '墙洞(D)'], [1, 'bk', '壁龛(I)'],
            [1, 'll', '连梁(G)'], [1, 'gl', '过梁(G)'], [1, 'dxd', '带形洞'], [1, 'dxc', '带形窗'],
            [0, '梁'],
            [1, 'liang', '梁(L)'], [1, 'ql', '圈梁(E)'],
            [0, '板'],
            [1, 'xjb', '现浇板(B)'], [1, 'lxb', '螺旋板(B)'], [1, 'zm', '柱帽(V)'], [1, 'bd', '板洞(N)'], [1, 'bslj', '板受力筋(S)'], [1, 'bfj', '板负筋(F)'], [1, 'lcbd', '楼层板带(H)'],
            [0, '基础'],
            [1, 'jcl', '基础梁(F)'], [1, 'fbjc', '筏板基础(M)'], [1, 'jsk', '集水坑(K)'], [1, 'zd', '柱墩(Y)'], [1, 'fbzj', '筏板主筋(R)'], [1, 'bslj', '筏板负筋(F)']
        ];

        const FOLDER = '<svg class="shrink-0" width="16" height="13" viewBox="0 0 16 13"><path d="M1 12V2h4l1 1h7v9z" fill="#e2b655" stroke="#97783a"/><path d="M3 5h12l-2 7H1z" fill="#fbe7ae" stroke="#97783a"/></svg>';

        document.getElementById('navTree').innerHTML = NAV.map(function (row, i) {
            if (row[0] === 0) {
                return '<div class="h-[16px] flex items-center whitespace-nowrap">' +
                    '<svg class="shrink-0" width="24" height="16" viewBox="0 0 24 16" fill="none"><path d="M7.500 6l3.500 3.500L14.500 6" stroke="#555" stroke-width="1.500"/><path d="M17 8h7" stroke="#777" stroke-dasharray="1 1"/></svg>' +
                    FOLDER + '<span class="ml-[4px]">' + row[1] + '</span></div>';
            }
            const last = !NAV[i + 1] || NAV[i + 1][0] === 0;
            const active = row[2] === '现浇板(B)';
            return '<div class="h-[16px] flex items-center whitespace-nowrap">' +
                '<svg class="shrink-0" width="40" height="16" viewBox="0 0 40 16" fill="none" stroke="#777" stroke-dasharray="1 1"><path d="M12.500 0v16M32.500 0V' + (last ? '8' : '16') + 'M33 8h7"/></svg>' +
                '<div class="h-[16px] flex items-center pl-[3px] pr-[4px] ' + (active ? 'bg-[#d9d9d9]' : '') + '">' +
                '<svg class="shrink-0" width="16" height="16" viewBox="0 0 16 16">' + ICONS[row[1]] + '</svg>' +
                '<span class="ml-[4px]">' + mixed(row[2]) + '</span></div></div>';
        }).join('');

        const GEAR = '<svg class="shrink-0" width="12" height="12" viewBox="0 0 14 14"><circle cx="7" cy="7" r="5.500" fill="#f5e500" stroke="#333" stroke-dasharray="2 1"/><path d="M2 7h10M7 2v10M4 4l6 6M10 4l-6 6" stroke="#333" stroke-width=".7"/></svg>';
        document.getElementById('compTree').innerHTML = ['B-1', 'B-2', 'B-3'].map(function (n, i) {
            return '<div class="h-[16px] flex items-center">' +
                '<svg class="shrink-0" width="39" height="16" viewBox="0 0 39 16" fill="none" stroke="#777" stroke-dasharray="1 1"><path d="M30.500 0V' + (i === 2 ? '8' : '16') + 'M31 8h8"/></svg>' +
                '<div class="flex items-center h-[16px] w-[45px] pl-[5px] ' + (i === 0 ? 'bg-[#316ac5] text-white' : '') + '">' + GEAR + '<span class="ml-[6px]">' + mixed(n) + '</span></div></div>';
        }).join('');

        const ROWS = [
            ['名称', 'B-1', 'b'], ['混凝土强度等级', '(C30)', 'b'], ['厚度(mm)', '(120)'], ['顶标高(m)', '层顶标高'], ['保护层厚度(mm)', '(15)'],
            ['马凳筋参数图', 'II 型', 's'], ['马凳筋信息', 'ф8@1000'], ['线形马凳筋方向', '平行横向受力筋'], ['拉筋', '', 'b'],
            ['马凳筋数量计算方式', '向上取整+1'], ['拉筋数量计算方式', '向上取整+1'], ['归类名称', '(B-1)'], ['汇总信息', '现浇板'], ['备注', ''], ['显示样式', '', 'g']
        ];

        const line = 'border-r border-b border-[#b9b9b9]';
        let html = '<div class="h-[23px] bg-gradient-to-b from-white to-[#eeeeee] ' + line + '"></div>' +
            '<div class="h-[23px] flex items-center justify-center bg-gradient-to-b from-white to-[#eeeeee] ' + line + '">属性名称</div>' +
            '<div class="h-[23px] flex items-center justify-center text-[#6c1a6e] bg-gradient-to-b from-[#fbe0a8] to-[#f2c46a] ' + line + '">属性值</div>' +
            '<div class="h-[23px] flex items-center justify-center bg-white ' + line + '">附加</div>';
        ROWS.forEach(function (r, i) {
            const sel = r[2] === 's';
            const color = r[2] === 'b' ? 'text-[#0000ee]' : r[2] === 'g' ? 'text-[#8a8a8a]' : sel ? 'text-white' : 'text-black';
            html += '<div class="h-[19px] flex items-center justify-center ' + line + ' ' + (sel ? 'bg-[#fcd79b] text-[#7a1a5a]' : 'bg-[#f3f3f3]') + '">' + mixed(String(i + 1)) + '</div>';
            html += '<div class="h-[19px] flex items-center pl-[20px] ' + line + ' ' + color + ' ' + (sel ? 'bg-[#0078d7]' : '') + '">' +
                (r[2] === 'g' ? '<span class="-ml-[18px] mr-[5px] w-[13px] h-[13px] border border-[#999] bg-white flex items-center justify-center text-black text-[12px]">+</span>' : '') + mixed(r[0]) + '</div>';
            html += '<div class="h-[19px] flex items-center pl-[2px] ' + line + ' ' + (sel ? 'bg-[#d5e8f7]' : '') + '">' + mixed(r[1]) + '</div>';
            html += '<div class="h-[19px] ' + line + '"></div>';
        });
        document.getElementById('propTable').innerHTML = html;
    </script>
</body>
</html>
